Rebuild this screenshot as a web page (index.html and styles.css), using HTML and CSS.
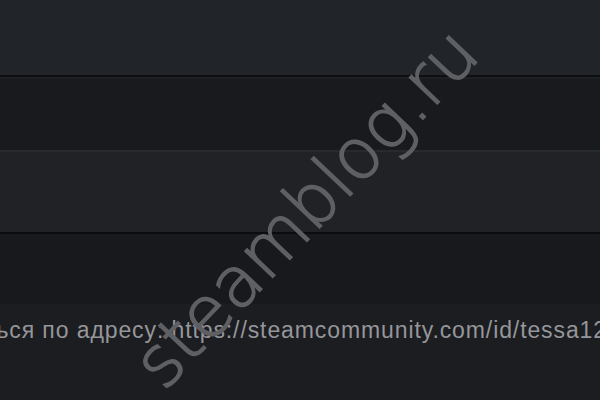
FILE: index.html
```html
<!DOCTYPE html>
<html lang="ru">
<head>
<meta charset="utf-8">
<title>Steam</title>
<link rel="stylesheet" href="styles.css">
</head>
<body>
<div class="page">
  <div class="panel-top"></div>
  <div class="band band-dark"></div>
  <div class="band band-light"></div>
  <div class="band band-dark2"></div>
  <div class="footer">
    <p class="url-line">Этот профиль всегда можно будет найти, если обратиться по адресу: https://steamcommunity.com/id/tessa12</p>
  </div>
  <div class="watermark">steamblog.ru</div>
</div>
</body>
</html>
```
FILE: styles.css
```css
html, body {
  margin: 0;
  padding: 0;
  width: 600px;
  height: 400px;
  overflow: hidden;
  background: #1c1d21;
}
.page {
  position: relative;
  width: 600px;
  height: 400px;
  display: flex;
  flex-direction: column;
  overflow: hidden;
}
.panel-top {
  height: 75px;
  background: #212429;
  border-bottom: 2px solid #0d0f12;
}
.band {
  flex: none;
}
.band-dark {
  height: 73px;
  background: #191a1e;
  box-shadow: inset 0 2px 0 #1e2024;
}
.band-light {
  height: 80px;
  background: #202226;
  border-top: 2px solid #272a2e;
  border-bottom: 2px solid #0b0c0e;
}
.band-dark2 {
  height: 70px;
  background: #17191c;
}
.footer {
  flex: 1;
  background: #1c1d21;
  display: flex;
  justify-content: flex-end;
  overflow: hidden;
}
.url-line {
  margin: 12px -7px 0 0;
  white-space: nowrap;
  font-family: "Liberation Sans", Arial, sans-serif;
  font-size: 23px;
  letter-spacing: 0.9px;
  line-height: 28px;
  color: #95969a;
}
.watermark {
  position: absolute;
  left: 164px;
  top: 333px;
  font-family: "DejaVu Sans", sans-serif;
  font-weight: 300;
  font-size: 70px;
  line-height: 1;
  color: #5e6064;
  -webkit-text-stroke: 1.6px #5e6064;
  white-space: nowrap;
  transform-origin: 0 59px;
  transform: rotate(-46.5deg);
}
```
